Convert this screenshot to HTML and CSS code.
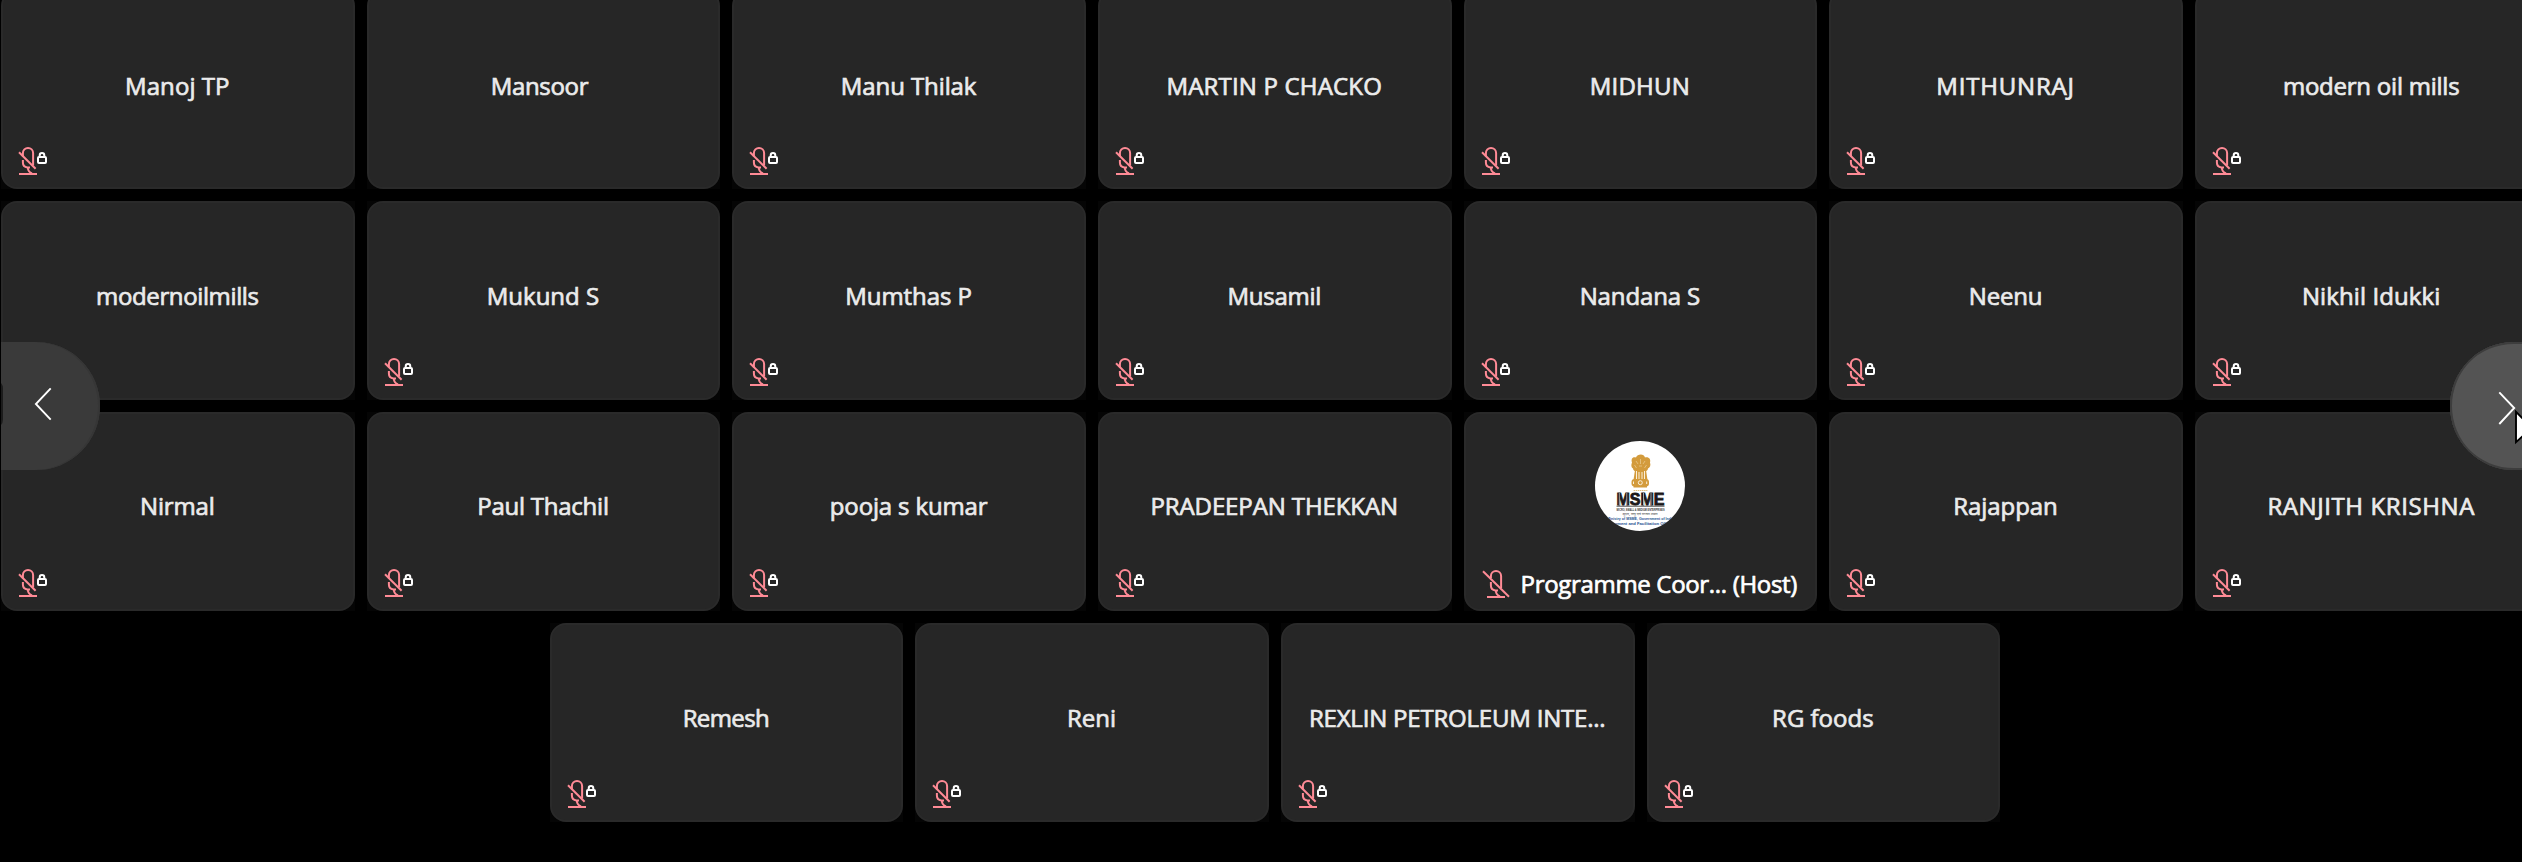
FILE: index.html
```html
<!DOCTYPE html>
<html lang="en">
<head>
<meta charset="utf-8">
<title>Participants</title>
<link rel="stylesheet" href="styles.css">
</head>
<body>
<svg class="defs" width="0" height="0" aria-hidden="true">
  <symbol id="mic-lock" viewBox="0 0 30 30">
    <g fill="none" stroke="#ff8b96" stroke-width="2">
      <path d="M4.900 10.500V7a5.100 5.100 0 0 1 10.200 0V19.500"/>
      <path d="M1 6.300L17.600 22.700"/>
      <path d="M4.900 14v2.500c0 3 2 4.700 4.600 4.900h2.500"/>
      <path d="M9.700 21.500c.3 3.200 1.800 5 4.300 6"/>
      <path d="M1 28H19"/>
    </g>
    <g fill="none" stroke="#fff" stroke-width="2">
      <rect x="20" y="11" width="8" height="6" rx="1"/>
      <path d="M21.700 10.500V9.400a2.300 2.300 0 0 1 4.600 0v1.100"/>
    </g>
  </symbol>
  <symbol id="mic-off" viewBox="0 0 30 30">
    <g fill="none" stroke="#ff8b96" stroke-width="2">
      <path d="M8.900 9V7a5.100 5.100 0 0 1 10.200 0V19"/>
      <path d="M1 2.300L27 27.700"/>
      <path d="M8.900 13v3.500c0 3 2 4.700 4.600 4.900h2.500"/>
      <path d="M13.700 21.500c.3 3.200 1.800 5 4.300 6"/>
      <path d="M5 28H23"/>
    </g>
  </symbol>
</svg>
<main class="stage">
  <section class="row row-1">
    <article class="tile"><span class="name" data-width="102">Manoj TP</span><svg class="mic"><use href="#mic-lock"/></svg></article>
    <article class="tile trailing"><span class="name" data-width="95">Mansoor</span></article>
    <article class="tile"><span class="name" data-width="133">Manu Thilak</span><svg class="mic"><use href="#mic-lock"/></svg></article>
    <article class="tile"><span class="name" data-width="213">MARTIN P CHACKO</span><svg class="mic"><use href="#mic-lock"/></svg></article>
    <article class="tile"><span class="name" data-width="98">MIDHUN</span><svg class="mic"><use href="#mic-lock"/></svg></article>
    <article class="tile"><span class="name" data-width="136">MITHUNRAJ</span><svg class="mic"><use href="#mic-lock"/></svg></article>
    <article class="tile"><span class="name" data-width="174">modern oil mills</span><svg class="mic"><use href="#mic-lock"/></svg></article>
  </section>
  <section class="row row-2">
    <article class="tile"><span class="name" data-width="160">modernoilmills</span></article>
    <article class="tile"><span class="name" data-width="110">Mukund S</span><svg class="mic"><use href="#mic-lock"/></svg></article>
    <article class="tile"><span class="name" data-width="124">Mumthas P</span><svg class="mic"><use href="#mic-lock"/></svg></article>
    <article class="tile"><span class="name" data-width="91">Musamil</span><svg class="mic"><use href="#mic-lock"/></svg></article>
    <article class="tile"><span class="name" data-width="118">Nandana S</span><svg class="mic"><use href="#mic-lock"/></svg></article>
    <article class="tile"><span class="name" data-width="71">Neenu</span><svg class="mic"><use href="#mic-lock"/></svg></article>
    <article class="tile"><span class="name" data-width="136">Nikhil Idukki</span><svg class="mic"><use href="#mic-lock"/></svg></article>
  </section>
  <section class="row row-3">
    <article class="tile"><span class="name" data-width="72">Nirmal</span><svg class="mic"><use href="#mic-lock"/></svg></article>
    <article class="tile"><span class="name" data-width="129">Paul Thachil</span><svg class="mic"><use href="#mic-lock"/></svg></article>
    <article class="tile"><span class="name" data-width="155">pooja s kumar</span><svg class="mic"><use href="#mic-lock"/></svg></article>
    <article class="tile"><span class="name" data-width="245">PRADEEPAN THEKKAN</span><svg class="mic"><use href="#mic-lock"/></svg></article>
    <article class="tile host">
      <svg class="avatar" viewBox="0 0 90 90">
        <clipPath id="disc"><circle cx="45" cy="45" r="45"/></clipPath>
        <circle cx="45" cy="45" r="45" fill="#fff"/>
        <g fill="#d39b3c">
          <path d="M41 16.500c1-3.500 8-4.500 9 0c4-1 6 2 5 5c1 3 0 5-2 6c0 2-2 3-4 3h-7c-2 0-4-1-4-3c-2-1-2-4-1-6c-1-3 0-6 4-5z"/>
          <path d="M40 29h11l1.500 10h-14z"/>
          <rect x="36.500" y="38" width="17.500" height="7.500" rx="3"/>
          <rect x="38.500" y="45" width="13.500" height="1.500"/>
        </g>
        <g fill="none" stroke="#fbf0da" stroke-width="1">
          <path d="M41.500 30v8M44 31v7M47 31v7M49.500 30v8"/>
          <circle cx="45.300" cy="41.700" r="2"/>
          <path d="M38.500 40.500v2.500M51.700 40.500v2.500"/>
        </g>
        <path d="M41 20l2 3M50 20l-2 3M45.500 18v5M39.500 24l2 3M51.500 24l-2 3M44 25h3" fill="none" stroke="#e9c88c" stroke-width=".8"/>
        <path d="M38.600 49.500h13.800" stroke="#e3bd7b" stroke-width="1" stroke-dasharray="1.500 .6"/>
        <text class="logo-title" x="21.500" y="63.500" textLength="48" lengthAdjust="spacingAndGlyphs">MSME</text>
        <path d="M24.300 52v12M31.800 52v12M48.500 52v12M56 52v12" stroke="#fff" stroke-width=".6"/>
        <path d="M21.500 65.200h48" stroke="#222" stroke-width=".8"/>
        <text class="logo-sub" x="21.500" y="69.600" textLength="48" lengthAdjust="spacingAndGlyphs">MICRO, SMALL &amp; MEDIUM ENTERPRISES</text>
        <text class="logo-hindi" x="27.500" y="73.600" textLength="35" lengthAdjust="spacingAndGlyphs">सूक्ष्म, लघु एवं मध्यम उद्यम</text>
        <g clip-path="url(#disc)">
          <text class="logo-blue" x="12" y="79.300" textLength="67" lengthAdjust="spacingAndGlyphs">Ministry of MSME, Government of India</text>
          <text class="logo-blue" x="6" y="84.300" textLength="71" lengthAdjust="spacingAndGlyphs">Development and Facilitation Office</text>
        </g>
      </svg>
      <div class="host-bar">
        <svg class="host-mic"><use href="#mic-off"/></svg>
        <span class="name host-name" data-width="274">Programme Coor... (Host)</span>
      </div>
    </article>
    <article class="tile"><span class="name" data-width="102">Rajappan</span><svg class="mic"><use href="#mic-lock"/></svg></article>
    <article class="tile"><span class="name" data-width="205">RANJITH KRISHNA</span><svg class="mic"><use href="#mic-lock"/></svg></article>
  </section>
  <section class="row row-4">
    <article class="tile"><span class="name" data-width="84">Remesh</span><svg class="mic"><use href="#mic-lock"/></svg></article>
    <article class="tile"><span class="name" data-width="46.500">Reni</span><svg class="mic"><use href="#mic-lock"/></svg></article>
    <article class="tile"><span class="name" data-width="294">REXLIN PETROLEUM INTE...</span><svg class="mic"><use href="#mic-lock"/></svg></article>
    <article class="tile"><span class="name" data-width="99">RG foods</span><svg class="mic"><use href="#mic-lock"/></svg></article>
  </section>
</main>
<button class="nav nav-prev" aria-label="Previous page">
  <svg width="99" height="128" viewBox="0 0 99 128"><path d="M0 41q2 2 2 6v30q0 4-2 6z" fill="#1c1c1c"/><path d="M49.700 46.300L34.900 62L49.700 77.700" fill="none" stroke="#fff" stroke-width="1.900"/></svg>
</button>
<button class="nav nav-next" aria-label="Next page">
  <svg width="72" height="128" viewBox="0 0 72 128"><path d="M49.300 50.300L64.200 66L49.300 82" fill="none" stroke="#fff" stroke-width="1.900"/></svg>
</button>
<svg class="cursor" width="7" height="36" viewBox="0 0 7 36"><path d="M9 9.800L1 1.800V32.200L9 25" fill="#fff" stroke="#000" stroke-width="1.900"/></svg>
<script src="fit.js"></script>
</body>
</html>
```

FILE: styles.css
```css
* { box-sizing: border-box; }
body {
  margin: 0;
  height: 862px;
  overflow: hidden;
  position: relative;
  background: #000;
  font-family: "Open Sans", "Noto Sans", sans-serif;
}
.defs { position: absolute; }
.stage {
  display: flex;
  flex-direction: column;
  gap: 12px;
  height: 872px;
  margin: 0 0 0 1px;
  overflow: hidden;
  transform: translateY(-10px);
}
.row { display: flex; gap: 12px; }
.row-4 { padding-left: 548.6px; }
.tile {
  position: relative;
  isolation: isolate;
  flex: 0 0 353.65px;
  height: 199px;
  background: #050505;
  display: flex;
  align-items: center;
  justify-content: center;
  padding: 0 1px 7px 0;
}
.tile::before {
  content: "";
  position: absolute;
  inset: 0;
  z-index: -1;
  border-radius: 16px;
  border: 2px solid #2a2a2a;
  background: #262626;
}
.row-2 .tile, .row-4 .tile { padding-bottom: 9px; }
.row-3 .tile { padding-bottom: 11px; }
.row-1 .trailing { padding-right: 8px; }
.name {
  color: #ebebeb;
  font-size: 24px;
  line-height: 32px;
  white-space: nowrap;
  -webkit-text-stroke: 0.7px currentColor;
}
.mic { position: absolute; left: 17px; bottom: 13px; width: 30px; height: 30px; }

.row-3 .host {
  flex-direction: column;
  align-items: flex-start;
  justify-content: space-between;
  padding: 29px 0 11px 18px;
}
.avatar { width: 90px; height: 90px; margin-left: 113px; }
.host-bar { display: flex; align-items: center; gap: 9px; }
.host-mic { width: 30px; height: 30px; }
.host-name { color: #fff; }
.logo-title { font: bold 15.600px "Liberation Sans", sans-serif; fill: #1b1718; stroke: #1b1718; stroke-width: .8px; }
.logo-sub { font: bold 3.400px "Liberation Sans", sans-serif; fill: #333; }
.logo-hindi { font: 3.800px "Noto Sans", sans-serif; fill: #333; }
.logo-blue { font: bold 3.900px "Liberation Sans", sans-serif; fill: #1d4f8f; }

.nav { position: absolute; top: 342px; height: 128px; padding: 0; border: 0; overflow: hidden; }
.nav svg { display: block; }
.nav-prev { left: 1px; width: 99px; border-radius: 0 64px 64px 0; background: #3a3a3a; box-shadow: inset -2px 0 0 #363636; }
.nav-next { left: 2450px; width: 72px; border-radius: 64px 0 0 64px; background: #545454; box-shadow: inset 2px 0 0 #3d3d3d, inset 0 2px 0 #3d3d3d, inset 0 -2px 0 #3d3d3d; }
.cursor { position: absolute; left: 2515px; top: 410px; }
```

FILE: fit.js
```js
// Spread each name's letters so the label takes its measured width.
document.querySelectorAll(".name").forEach(function (el) {
  var sideBearings = 2.5;
  var target = parseFloat(el.dataset.width) + sideBearings;
  var natural = el.getBoundingClientRect().width;
  el.style.letterSpacing = (target - natural) / el.textContent.length + "px";
});
```
